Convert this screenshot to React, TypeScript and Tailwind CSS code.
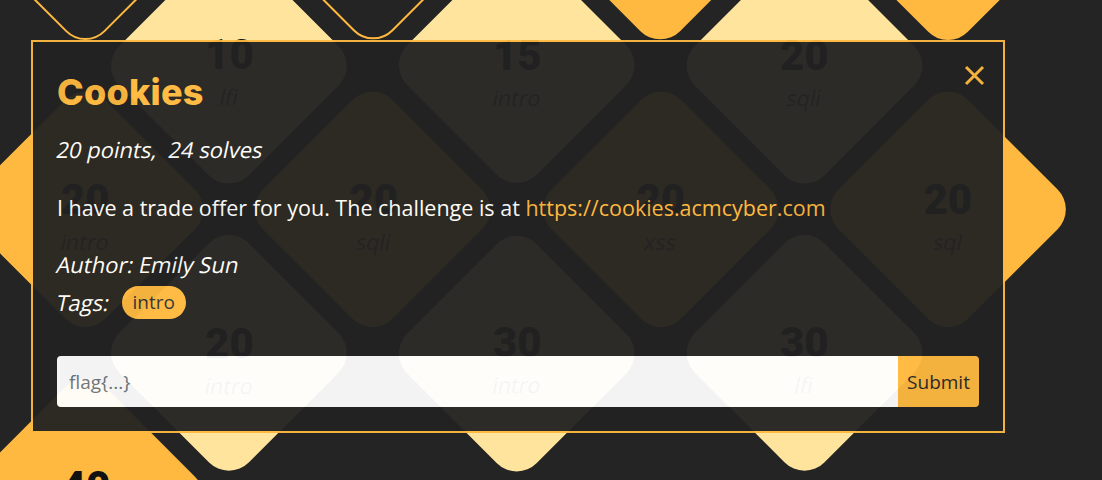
const tiles = [
  { pos: "col-start-1 row-start-4", kind: "outline", points: 10, tag: "misc" },
  { pos: "col-start-2 row-start-3", kind: "outline", points: 10, tag: "intro" },
  { pos: "col-start-3 row-start-2", kind: "solved", points: 10, tag: "intro" },
  { pos: "col-start-4 row-start-1", kind: "solved", points: 10, tag: "web" },
  { pos: "col-start-2 row-start-4", kind: "open", points: 10, tag: "lfi" },
  { pos: "col-start-3 row-start-3", kind: "open", points: 15, tag: "intro" },
  { pos: "col-start-4 row-start-2", kind: "open", points: 20, tag: "sqli" },
  { pos: "col-start-2 row-start-5", kind: "solved", points: 20, tag: "intro" },
  { pos: "col-start-3 row-start-4", kind: "solved", points: 20, tag: "sqli" },
  { pos: "col-start-4 row-start-3", kind: "solved", points: 20, tag: "xss" },
  { pos: "col-start-5 row-start-2", kind: "solved", points: 20, tag: "sql" },
  { pos: "col-start-3 row-start-5", kind: "open", points: 20, tag: "intro" },
  { pos: "col-start-4 row-start-4", kind: "open", points: 30, tag: "intro" },
  { pos: "col-start-5 row-start-3", kind: "open", points: 30, tag: "lfi" },
  { pos: "col-start-3 row-start-6", kind: "solved", points: 40, tag: "web" },
];

const kindClass: Record<string, string> = {
  open: "bg-[#ffe49e]",
  solved: "bg-[#ffb940]",
  outline: "border-2 border-[#ffb940]",
};

function Board() {
  return (
    <div className="absolute left-[-52.7px] top-[-462px] rotate-45 grid grid-cols-[repeat(5,183px)] grid-rows-[repeat(6,183px)] gap-[20.2px]">
      {tiles.map((t, i) => (
        <div key={i} className={`${t.pos} ${kindClass[t.kind]} rounded-[28px] flex items-center justify-center`}>
          <div className="-rotate-45 flex flex-col items-center gap-[5px] pt-[18px]">
            <span className="font-['Roboto'] font-black text-[42px] leading-none text-[#111]">{t.points}</span>
            <span className="inline-block -skew-x-12 font-['Open_Sans'] text-[21.5px] leading-[1.5] text-[#3a3a3a]">{t.tag}</span>
          </div>
        </div>
      ))}
    </div>
  );
}

function Slanted({ children }: { children: React.ReactNode }) {
  return <span className="inline-block -skew-x-12">{children}</span>;
}

function ChallengeModal() {
  return (
    <div className="absolute left-[31px] top-[40px] w-[974px] border-2 border-[#ffb940] bg-[#222222] opacity-95 px-[24px] pt-[29px] pb-[24px] font-['Open_Sans'] text-white">
      <button className="absolute right-[18px] top-[23px]">
        <svg width="21" height="21" viewBox="0 0 21 21" fill="none" stroke="#ffb940" strokeWidth="3">
          <path d="M2 2L19 19M19 2L2 19" />
        </svg>
      </button>

      <h2 className="font-['Inter'] font-extrabold text-[36px] leading-[1.2] tracking-[0.2px] text-[#ffb940]">Cookies</h2>
      <p className="mt-[19px] text-[22px] leading-[1.5]">
        <Slanted>20 points,&nbsp; 24 solves</Slanted>
      </p>
      <p className="mt-[26px] text-[21.5px] leading-[1.5]">
        I have a trade offer for you. The challenge is at{" "}
        <a href="#" className="text-[#ffb940]">https://cookies.acmcyber.com</a>
      </p>
      <p className="mt-[24px] text-[22px] leading-[1.5]">
        <Slanted>Author: Emily Sun</Slanted>
      </p>
      <div className="mt-[5px] flex items-center gap-[12px]">
        <span className="text-[22px] leading-[1.5]">
          <Slanted>Tags:</Slanted>
        </span>
        <span className="rounded-full bg-[#ffb940] px-[11px] py-[4px] text-[19px] leading-[25px] text-[#333]">intro</span>
      </div>

      <form className="mt-[37px] flex h-[51px]" onSubmit={(e) => e.preventDefault()}>
        <input
          className="flex-1 rounded-l-[4px] bg-white px-[12px] text-[19px] text-[#333] placeholder:text-[#6c757d] outline-none"
          placeholder="flag{...}"
        />
        <button className="w-[81px] rounded-r-[4px] bg-[#ffb940] text-[19px] text-[#2b2b2b]">Submit</button>
      </form>
    </div>
  );
}

export default function App() {
  return (
    <div className="relative h-[480px] w-full overflow-hidden bg-[#242424]">
      <Board />
      <ChallengeModal />
    </div>
  );
}
